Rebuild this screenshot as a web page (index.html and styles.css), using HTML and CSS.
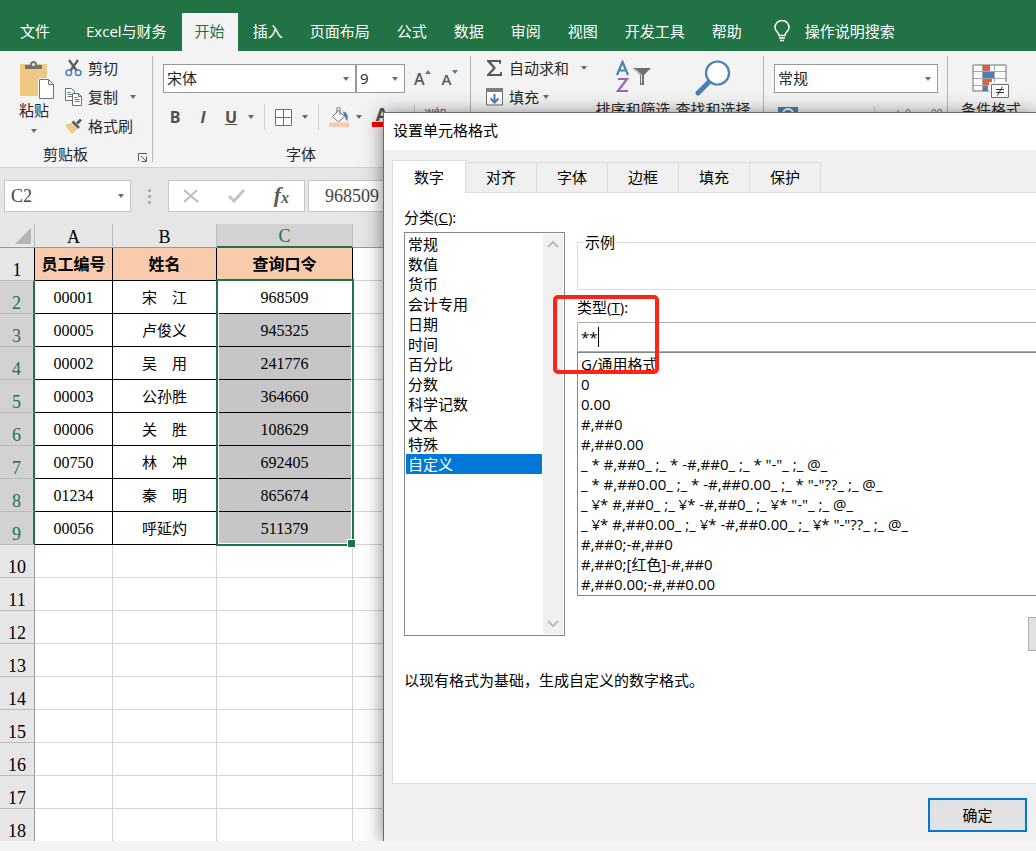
FILE: index.html
```html
<!DOCTYPE html>
<html lang="zh-CN">
<head>
    <meta charset="UTF-8">
    <meta name="viewport" content="width=device-width, initial-scale=1.0">
    <title>设置单元格格式</title>
    <link rel="stylesheet" href="styles.css">
</head>
<body>
    <div class="app">
        <header class="tab-bar">
            <button class="tab file-tab">文件</button>
            <button class="tab">Excel与财务</button>
            <button class="tab active">开始</button>
            <button class="tab">插入</button>
            <button class="tab">页面布局</button>
            <button class="tab">公式</button>
            <button class="tab">数据</button>
            <button class="tab">审阅</button>
            <button class="tab">视图</button>
            <button class="tab">开发工具</button>
            <button class="tab">帮助</button>
            <button class="tab search-tab">
                <svg width="18" height="22" viewBox="0 0 18 22" fill="none" stroke="#fff" stroke-width="1.5">
                    <path d="M6 15.500c0-3-4-4-4-8a7 7 0 0 1 14 0c0 4-4 5-4 8zM6 18h6M7 20.500h4"/>
                </svg>
                操作说明搜索
            </button>
        </header>

        <div class="ribbon">
            <section class="group clipboard">
                <div class="group-body">
                    <button class="big-button paste">
                        <svg width="36" height="40" viewBox="0 0 36 40">
                            <rect x="1" y="4" width="27" height="32" rx="1" fill="#efc981"/>
                            <path d="M6 9V5h5a3.500 4 0 0 1 7 0h5v4z" fill="#737373"/>
                            <circle cx="14.500" cy="4.500" r="1.500" fill="#f3f3f3"/>
                            <path d="M19 18h12l5 6v16h-17z" fill="#f3f3f3"/>
                            <path d="M20.500 19.500h9l5 5v14h-14z" fill="#fff" stroke="#737373"/>
                            <path d="M29.500 19.500v5h5" fill="none" stroke="#737373"/>
                        </svg>
                        <span>粘贴</span>
                        <i class="caret"></i>
                    </button>
                    <div class="stack">
                        <button class="row-button">
                            <svg width="17" height="18" viewBox="0 0 17 18" fill="none">
                                <path d="M4 1l7.500 10.500M13 1L5.500 11.500" stroke="#5f5f5f" stroke-width="2.400"/>
                                <circle cx="3.800" cy="13.800" r="2.800" stroke="#4a80b8" stroke-width="1.500"/>
                                <circle cx="13.200" cy="13.800" r="2.800" stroke="#4a80b8" stroke-width="1.500"/>
                            </svg>
                            剪切
                        </button>
                        <button class="row-button">
                            <svg width="17" height="18" viewBox="0 0 17 18" fill="#fff" stroke="#6f6f6f">
                                <path d="M.5.5h6l3 3v9h-9z"/>
                                <path d="M2.500 4.500h3M2.500 6.500h5M2.500 8.500h5" stroke="#4a80b8"/>
                                <path d="M7.500 5.500h6l3 3v9h-9z"/>
                                <path d="M13.500 5.500v3h3" fill="none"/>
                                <path d="M9.500 9.500h3M9.500 11.500h5M9.500 13.500h5" stroke="#4a80b8"/>
                            </svg>
                            复制
                            <i class="caret wide"></i>
                        </button>
                        <button class="row-button">
                            <svg width="17" height="18" viewBox="0 0 17 18">
                                <path d="M0 8l6-2 6 6-5 5z" fill="#efc981"/>
                                <path d="M6.500 5.500l2-2 6.500 6.500-2 2z" fill="#5f5f5f"/>
                                <path d="M11.500 5.500l3.500-3.500 1.500 1.500-3.500 3.500z" fill="#5f5f5f" stroke="#5f5f5f"/>
                            </svg>
                            格式刷
                        </button>
                    </div>
                </div>
                <div class="group-label">剪贴板</div>
                <button class="launcher" aria-label="剪贴板设置">
                    <svg width="10" height="9" viewBox="0 0 10 9" fill="none" stroke="#555"><path d="M.5 8V.5H9M3 3l5 5M8.500 3.500v5H3.500"/></svg>
                </button>
            </section>

            <section class="group font">
                <div class="font-row">
                    <div class="select font-name">
                        <select aria-label="字体"><option>宋体</option></select>
                    </div>
                    <div class="select font-size">
                        <select aria-label="字号"><option>9</option></select>
                    </div>
                    <button class="size-button" aria-label="增大字号">A<svg width="6" height="4" viewBox="0 0 6 4"><path d="M0 4l3-4 3 4z" fill="#4a80b8"/></svg></button>
                    <button class="size-button small" aria-label="减小字号">A<svg width="6" height="4" viewBox="0 0 6 4"><path d="M0 0h6L3 4z" fill="#4a80b8"/></svg></button>
                </div>
                <div class="font-row style-row">
                    <button class="letter"><b>B</b></button>
                    <button class="letter"><b><em>I</em></b></button>
                    <button class="letter underline"><b><u>U</u></b></button>
                    <i class="caret"></i>
                    <i class="divider"></i>
                    <button aria-label="边框">
                        <svg width="17" height="18" viewBox="0 0 17 18" fill="#fff" stroke="#6f6f6f"><path d="M.5 1.500h16v16H.5zM8.500 1.500v16M.5 9.500h16"/></svg>
                    </button>
                    <i class="caret"></i>
                    <i class="divider"></i>
                    <button class="fill-color" aria-label="填充颜色">
                        <svg width="20" height="20" viewBox="0 0 20 20">
                            <path d="M3.500 9.500l6-6 6 6-6 5.500z" fill="#fff" stroke="#6f6f6f"/>
                            <path d="M8 5V1.500a1.500 1.500 0 0 1 3 0V8" fill="none" stroke="#6f6f6f"/>
                            <path d="M14 4.500c4 .5 5.500 3.500 4.500 9.500-2-1-2-4-3.500-5.500z" fill="#4a80b8"/>
                            <rect y="15.500" width="20" height="4.500" fill="#f8cbad"/>
                        </svg>
                    </button>
                    <i class="caret"></i>
                    <button class="font-color" aria-label="字体颜色">A</button>
                    <i class="divider"></i>
                    <span class="pinyin">wén</span>
                </div>
                <div class="group-label">字体</div>
            </section>

            <section class="group editing">
                <div class="group-body">
                    <div class="stack">
                        <button class="row-button">
                            <svg width="17" height="18" viewBox="0 0 17 18"><path d="M1 1h14v4h-1.500L13 3H5l5 6-5.500 6H13.500l1-2H16v4H1v-1.500L7 9 1 2.500z" fill="#5a5a5a"/></svg>
                            自动求和
                            <i class="caret wide"></i>
                        </button>
                        <button class="row-button">
                            <svg width="17" height="18" viewBox="0 0 17 18">
                                <path d="M.5 1h16v16H.5z" fill="#fff" stroke="#6f6f6f"/>
                                <path d="M0 0h17v4H0z" fill="#808080"/>
                                <path d="M8.500 6v8M4.500 10.500l4 4 4-4" fill="none" stroke="#4a80b8" stroke-width="2"/>
                            </svg>
                            填充
                            <i class="caret near"></i>
                        </button>
                    </div>
                    <button class="big-button">
                        <svg width="36" height="38" viewBox="0 0 36 38" fill="none">
                            <path d="M2 15L7.500 2 13 15M4 10.500h7" stroke="#4a80b8" stroke-width="2.200"/>
                            <path d="M3 19h9L3 31h10" stroke="#9a66b5" stroke-width="2.200"/>
                            <path d="M18 8h18l-7 7v10h-4V15z" fill="#6f6f6f"/>
                            <path d="M20.500 9.500l6 5.500v8.500" stroke="#f3f3f3"/>
                        </svg>
                        <span>排序和筛选</span>
                    </button>
                    <button class="big-button">
                        <svg width="36" height="38" viewBox="0 0 36 38">
                            <path d="M3 33l11-11" stroke="#4a80b8" stroke-width="5" stroke-linecap="round"/>
                            <circle cx="22.500" cy="13" r="11.500" fill="#fff" stroke="#4a80b8" stroke-width="2.200"/>
                        </svg>
                        <span>查找和选择</span>
                    </button>
                </div>
            </section>

            <section class="group number">
                <div class="font-row">
                    <div class="select number-format">
                        <select aria-label="数字格式"><option>常规</option></select>
                    </div>
                </div>
                <div class="number-row">
                    <svg width="20" height="16" viewBox="0 0 20 16"><path d="M0 0h20v14H0z" fill="#4a80b8"/><circle cx="10" cy="7" r="5" fill="none" stroke="#fff" stroke-width="2"/></svg>
                    <span>%</span>
                    <span>,</span>
                    <i class="divider"></i>
                    <span class="decimals"><b>←</b>0</span>
                    <span class="decimals">00</span>
                </div>
            </section>

            <section class="group styles">
                <div class="group-body">
                    <button class="big-button">
                        <svg width="38" height="35" viewBox="0 0 38 35">
                            <path d="M1 1h33v26H1z" fill="#fff"/>
                            <path d="M11 1h7v6h-7zM11 15h9v6h-9z" fill="#dd6040"/>
                            <path d="M11 8h11v6H11zM11 22h5v5h-5z" fill="#4a80b8"/>
                            <path d="M1 7.500h33M1 14.500h33M1 21.500h33M10.500 1v26M22.500 1v26" fill="none" stroke="#a8a8a8"/>
                            <path d="M1 1h33v26H1z" fill="none" stroke="#6f6f6f"/>
                            <path d="M17 18h21v17H17z" fill="#f3f3f3"/>
                            <path d="M19.500 20.500h17v13h-17z" fill="#fff" stroke="#6f6f6f"/>
                            <path d="M24 25.500h8M24 28.500h8M30.500 22.500l-5 9" stroke="#333"/>
                        </svg>
                        <span>条件格式</span>
                    </button>
                </div>
            </section>
        </div>

        <div class="formula-bar">
            <div class="select name-box">
                <input type="text" value="C2" aria-label="名称框">
            </div>
            <div class="grip"><i></i><i></i><i></i></div>
            <div class="formula-buttons">
                <button aria-label="取消"><svg width="16" height="14" viewBox="0 0 16 14" fill="none" stroke="#bcbcbc" stroke-width="2"><path d="M1 1l14 12M14 1L1 13"/></svg></button>
                <button aria-label="输入"><svg width="17" height="14" viewBox="0 0 17 14" fill="none" stroke="#c4c4c4" stroke-width="3"><path d="M1 7l5 5L16 1"/></svg></button>
                <button class="fx"><b>f<sub>x</sub></b></button>
            </div>
            <input type="text" class="formula-input" value="968509" aria-label="编辑栏">
        </div>

        <table class="sheet">
            <colgroup>
                <col class="col-num"><col class="col-a"><col class="col-b"><col class="col-c"><col>
            </colgroup>
            <thead>
                <tr>
                    <th class="corner"><svg width="16" height="16" viewBox="0 0 16 16"><path d="M16 0v16H0z" fill="#b4b4b4"/></svg></th>
                    <th>A</th><th>B</th><th class="selected">C</th><th></th>
                </tr>
            </thead>
            <tbody>
                <tr class="data title"><th>1</th><td>员工编号</td><td>姓名</td><td>查询口令</td><td></td></tr>
                <tr class="data picked"><th>2</th><td>00001</td><td>宋　江</td><td class="current">968509<div class="selection"></div></td><td></td></tr>
                <tr class="data picked"><th>3</th><td>00005</td><td>卢俊义</td><td>945325</td><td></td></tr>
                <tr class="data picked"><th>4</th><td>00002</td><td>吴　用</td><td>241776</td><td></td></tr>
                <tr class="data picked"><th>5</th><td>00003</td><td>公孙胜</td><td>364660</td><td></td></tr>
                <tr class="data picked"><th>6</th><td>00006</td><td>关　胜</td><td>108629</td><td></td></tr>
                <tr class="data picked"><th>7</th><td>00750</td><td>林　冲</td><td>692405</td><td></td></tr>
                <tr class="data picked"><th>8</th><td>01234</td><td>秦　明</td><td>865674</td><td></td></tr>
                <tr class="data picked"><th>9</th><td>00056</td><td>呼延灼</td><td>511379</td><td></td></tr>
                <tr><th>10</th><td></td><td></td><td></td><td></td></tr>
                <tr><th>11</th><td></td><td></td><td></td><td></td></tr>
                <tr><th>12</th><td></td><td></td><td></td><td></td></tr>
                <tr><th>13</th><td></td><td></td><td></td><td></td></tr>
                <tr><th>14</th><td></td><td></td><td></td><td></td></tr>
                <tr><th>15</th><td></td><td></td><td></td><td></td></tr>
                <tr><th>16</th><td></td><td></td><td></td><td></td></tr>
                <tr><th>17</th><td></td><td></td><td></td><td></td></tr>
                <tr><th>18</th><td></td><td></td><td></td><td></td></tr>
            </tbody>
        </table>

        <div class="dialog" role="dialog" aria-labelledby="dialog-title">
            <div class="dialog-title" id="dialog-title">设置单元格格式</div>
            <div class="dialog-tabs">
                <button class="dialog-tab active">数字</button>
                <button class="dialog-tab">对齐</button>
                <button class="dialog-tab">字体</button>
                <button class="dialog-tab">边框</button>
                <button class="dialog-tab">填充</button>
                <button class="dialog-tab">保护</button>
            </div>
            <div class="panel">
                <div class="panel-columns">
                    <div class="category">
                        <div class="label" id="category-label">分类(<u>C</u>):</div>
                        <div class="listbox">
                            <ul role="listbox" aria-labelledby="category-label">
                                <li role="option">常规</li>
                                <li role="option">数值</li>
                                <li role="option">货币</li>
                                <li role="option">会计专用</li>
                                <li role="option">日期</li>
                                <li role="option">时间</li>
                                <li role="option">百分比</li>
                                <li role="option">分数</li>
                                <li role="option">科学记数</li>
                                <li role="option">文本</li>
                                <li role="option">特殊</li>
                                <li role="option" class="chosen" aria-selected="true">自定义</li>
                            </ul>
                            <div class="scrollbar">
                                <svg width="12" height="8" viewBox="0 0 12 8" fill="none" stroke="#bcbcbc" stroke-width="2"><path d="M1 7l5-5 5 5"/></svg>
                                <svg width="12" height="8" viewBox="0 0 12 8" fill="none" stroke="#bcbcbc" stroke-width="2"><path d="M1 1l5 5 5-5"/></svg>
                            </div>
                        </div>
                    </div>
                    <div class="custom">
                        <fieldset class="sample"><legend>示例</legend></fieldset>
                        <div class="type">
                            <label class="label" for="type-input">类型(<u>T</u>):</label>
                            <div class="type-field">
                                <input type="text" id="type-input" value="**">
                                <i class="text-cursor"></i>
                            </div>
                            <ul class="formats" role="listbox" aria-label="类型">
                                <li role="option">G/通用格式</li>
                                <li role="option">0</li>
                                <li role="option">0.00</li>
                                <li role="option">#,##0</li>
                                <li role="option">#,##0.00</li>
                                <li role="option">_ * #,##0_ ;_ * -#,##0_ ;_ * "-"_ ;_ @_</li>
                                <li role="option">_ * #,##0.00_ ;_ * -#,##0.00_ ;_ * "-"??_ ;_ @_</li>
                                <li role="option">_ ¥* #,##0_ ;_ ¥* -#,##0_ ;_ ¥* "-"_ ;_ @_</li>
                                <li role="option">_ ¥* #,##0.00_ ;_ ¥* -#,##0.00_ ;_ ¥* "-"??_ ;_ @_</li>
                                <li role="option">#,##0;-#,##0</li>
                                <li role="option">#,##0;[红色]-#,##0</li>
                                <li role="option">#,##0.00;-#,##0.00</li>
                            </ul>
                            <div class="highlight"></div>
                        </div>
                        <button class="delete-button" aria-label="删除"></button>
                    </div>
                </div>
                <p class="hint">以现有格式为基础，生成自定义的数字格式。</p>
            </div>
            <div class="dialog-footer">
                <button class="ok-button">确定</button>
            </div>
        </div>
    </div>
</body>
</html>
```
FILE: styles.css
```css
* {
    box-sizing: border-box;
}

body {
    margin: 0;
    background-color: #f4f4f4;
    color: #262626;
    font: 15px/20px "Open Sans", "Noto Sans CJK SC", sans-serif;
}

button {
    margin: 0;
    padding: 0;
    border: none;
    background: none;
    color: inherit;
    font: inherit;
    white-space: nowrap;
}

input, select {
    font: inherit;
    color: inherit;
    border-radius: 0;
    outline: none;
}

ul {
    margin: 0;
    padding: 0;
    list-style: none;
}

svg {
    flex: none;
    display: block;
}

.app {
    position: relative;
    height: calc(100vh - 10px);
    overflow: hidden;
    background-color: white;
}

/* ribbon tabs */
.tab-bar {
    display: flex;
    gap: 3px;
    height: 51px;
    padding: 13px 0 0 8px;
    background-color: #217346;
    color: white;
}

.tab {
    height: 38px;
    padding: 0 12px 3px;
}

.file-tab {
    margin-right: 9px;
}

.tab.active {
    padding: 0 13px 3px;
    background-color: #f3f3f3;
    color: #217346;
}

.search-tab {
    display: flex;
    align-items: center;
    gap: 14px;
    margin-left: 4px;
}

/* ribbon */
.ribbon {
    display: flex;
    height: 117px;
    background-color: #f3f3f3;
    border-bottom: 1px solid #d2d2d2;
    overflow: hidden;
}

.group {
    position: relative;
    flex: none;
    display: flex;
    flex-direction: column;
    padding-top: 2px;
}

.group::after {
    content: "";
    position: absolute;
    top: 5px;
    bottom: 5px;
    right: 0;
    width: 1px;
    background-color: #b4b4b4;
}

.group-body {
    display: flex;
}

.group-label {
    margin-top: auto;
    padding-right: 22px;
    line-height: 26px;
    text-align: center;
}

.clipboard {
    width: 153px;
}

.font {
    width: 318px;
}

.editing {
    width: 293px;
}

.number {
    width: 184px;
}

.styles {
    flex: 1;
}

.styles::after {
    display: none;
}

.big-button {
    display: flex;
    flex-direction: column;
    align-items: center;
    height: 87px;
    padding-top: 7px;
}

.big-button span {
    margin-top: auto;
    margin-bottom: 21px;
}

.paste {
    width: 36px;
    margin: 0 13px 0 16px;
}

.paste svg {
    margin-left: 6px;
}

.paste span {
    margin: 0;
}

.paste .caret {
    margin-top: 9px;
}

.caret {
    flex: none;
    width: 0;
    border: 3px solid transparent;
    border-top: 4px solid #6a6a6a;
    border-bottom: none;
}

.caret.wide {
    margin-left: 6px;
}

.caret.near {
    margin-left: -2px;
}

.row-button {
    display: flex;
    align-items: center;
    gap: 6px;
    height: 29px;
}

.launcher {
    position: absolute;
    right: 5px;
    bottom: 5px;
}

.select {
    position: relative;
    height: 29px;
    border: 1px solid #999;
    background-color: white;
}

.select select, .select input {
    display: block;
    width: 100%;
    height: 100%;
    padding: 0 3px 2px;
    border: none;
    background: none;
    appearance: none;
}

.select::after {
    content: "";
    position: absolute;
    top: 12px;
    right: 6px;
    border: 3px solid transparent;
    border-top: 4px solid #6a6a6a;
    border-bottom: none;
}

.font-row {
    display: flex;
    align-items: center;
    padding: 11px 0 0 10px;
}

.font-name {
    width: 193px;
}

.font-size {
    width: 49px;
}

.number-format {
    width: 164px;
}

.size-button {
    display: flex;
    align-items: center;
    margin-left: 9px;
    color: #5a5a5a;
    font-size: 16px;
    font-weight: 600;
}

.size-button svg {
    margin-bottom: 14px;
}

.size-button.small {
    margin-left: 11px;
    font-size: 15px;
}

.style-row {
    gap: 10px;
    padding: 11px 0 0 15px;
    color: #505050;
}

.letter {
    width: 14px;
    height: 26px;
    margin-right: 4px;
    font-size: 16px;
}

.letter.underline {
    margin-right: 0;
}

.divider {
    flex: none;
    width: 1px;
    height: 26px;
    background-color: #d0d0d0;
}

.fill-color {
    margin-right: -3px;
}

.font-color {
    flex: none;
    width: 20px;
    height: 20px;
    margin-right: 12px;
    border-bottom: 5px solid red;
    font-size: 18px;
    font-weight: 700;
    line-height: 15px;
}

.pinyin {
    align-self: flex-start;
    font-size: 11px;
    line-height: 14px;
}

.editing .stack {
    width: 122px;
    padding-left: 15px;
}

.editing .big-button {
    width: 80px;
}

.number-row {
    display: flex;
    align-items: flex-start;
    gap: 20px;
    padding: 14px 0 0 14px;
    color: #6a6a6a;
}

.decimals {
    font-size: 10px;
    line-height: 12px;
}

.decimals b {
    color: #4a80b8;
}

.styles .big-button {
    width: 86px;
    padding-top: 11px;
}

/* formula bar */
.formula-bar {
    display: flex;
    align-items: center;
    height: 56px;
    padding: 0 0 0 4px;
    background-color: #e6e6e6;
    color: #444;
    font: 18px/20px "Liberation Serif", serif;
}

.name-box {
    width: 127px;
    height: 32px;
    border-color: #c6c6c6;
}

.name-box input {
    padding: 0 6px;
}

.name-box::after {
    top: 13px;
}

.grip {
    display: flex;
    flex-direction: column;
    gap: 3px;
    width: 37px;
    padding-left: 17px;
}

.grip i {
    width: 3px;
    height: 3px;
    background-color: #b0b0b0;
}

.formula-buttons {
    display: flex;
    align-items: center;
    justify-content: space-between;
    width: 137px;
    height: 32px;
    padding: 0 15px 0 14px;
    border: 1px solid #c6c6c6;
    background-color: white;
}

.fx {
    color: #5a5a5a;
    font-size: 22px;
    font-style: italic;
}

.fx sub {
    font-size: 16px;
    vertical-align: -1px;
}

.formula-input {
    flex: 1;
    height: 32px;
    margin-left: 3px;
    padding: 0 16px;
    border: 1px solid #c6c6c6;
}

/* sheet */
.sheet {
    width: 100%;
    table-layout: fixed;
    border-spacing: 0;
    color: black;
    font: 16px/20px "Liberation Serif", "Noto Sans CJK SC", serif;
}

.col-num {
    width: 35px;
}

.col-a {
    width: 78px;
}

.col-b {
    width: 104px;
}

.col-c {
    width: 136px;
}

.sheet th {
    height: 33px;
    padding: 0;
    background-color: #e6e6e6;
    border-right: 1px solid #999;
    border-bottom: 1px solid #bbb;
    font-size: 18px;
    font-weight: 400;
    vertical-align: bottom;
}

.sheet thead th {
    height: 24px;
    border-right-color: #bbb;
    border-bottom-color: #999;
}

.sheet thead .selected {
    background-color: #d2d2d2;
    border-bottom: 2px solid #217346;
    color: #217346;
}

.corner svg {
    margin: 0 0 3px 15px;
}

.sheet td {
    height: 33px;
    padding: 2px 0 0;
    border-right: 1px solid #d4d4d4;
    border-bottom: 1px solid #d4d4d4;
    text-align: center;
}

.data td:not(:last-child) {
    border-color: black;
}

.title th {
    border-right-color: black;
}

.title td:not(:last-child) {
    background-color: #f8cbad;
    font-weight: 700;
}

.picked th {
    background-color: #d2d2d2;
    border-right: 2px solid #217346;
    color: #217346;
}

.picked td:nth-child(3) {
    font-size: 15px;
}

.picked td:nth-child(4) {
    background-color: #c6c6c6;
}

.picked td.current {
    position: relative;
    background-color: white;
}

.selection {
    position: absolute;
    top: -2px;
    left: -1px;
    width: 138px;
    height: 267px;
    border: 2px solid #217346;
    box-shadow: inset 0 0 0 1px white;
}

.selection::after {
    content: "";
    position: absolute;
    right: -4px;
    bottom: -4px;
    width: 7px;
    height: 7px;
    border: 1px solid white;
    background-color: #217346;
}

/* dialog */
.dialog {
    position: absolute;
    top: 112px;
    left: 383px;
    right: 0;
    bottom: 0;
    display: flex;
    flex-direction: column;
    border: solid #6a6a6a;
    border-width: 1px 0 0 1px;
    background-color: #f0f0f0;
    box-shadow: 0 2px 18px rgba(0, 0, 0, 0.5);
    color: black;
}

.dialog-title {
    height: 37px;
    padding: 0 9px;
    background-color: white;
    line-height: 35px;
}

.dialog-tabs {
    position: relative;
    display: flex;
    align-items: flex-end;
    height: 43px;
    padding-left: 8px;
}

.dialog-tab {
    width: 71px;
    height: 31px;
    padding-bottom: 1px;
    border: 1px solid #dcdcdc;
    border-left: none;
}

.dialog-tab.active {
    width: 74px;
    height: 33px;
    border: 1px solid #dcdcdc;
    border-bottom: none;
    background-color: white;
}

.panel {
    flex: 1;
    margin: -1px 0 0 8px;
    padding: 14px 0 0 11px;
    border: 1px solid #dcdcdc;
    border-right: none;
    background-color: white;
}

.panel-columns {
    display: flex;
    gap: 12px;
}

.category {
    flex: none;
    width: 161px;
}

.label {
    display: block;
    height: 25px;
}

.listbox {
    display: flex;
    height: 404px;
    padding: 1px;
    border: 1px solid #828790;
}

.listbox ul {
    flex: 1;
}

.listbox li {
    padding-left: 2px;
}

.listbox .chosen {
    background-color: #0078d7;
    color: white;
}

.scrollbar {
    display: flex;
    flex-direction: column;
    justify-content: space-between;
    align-items: center;
    width: 20px;
    margin-left: 1px;
    padding: 6px 0;
    background-color: #f0f0f0;
}

.custom {
    flex: 1;
    min-width: 0;
    padding-top: 25px;
}

.sample {
    height: 58px;
    margin: 0;
    padding: 0;
    border: 1px solid #dcdcdc;
    border-right: none;
}

.sample legend {
    margin-left: 6px;
    padding: 0 1px;
}

.type {
    position: relative;
    margin-top: 7px;
}

.type-field {
    display: flex;
    align-items: center;
    height: 30px;
    border: 1px solid #adadad;
    border-right: none;
}

.type-field input {
    width: 20px;
    padding: 0 0 0 3px;
    border: none;
    background: none;
}

.text-cursor {
    width: 1px;
    height: 20px;
    background-color: black;
}

.formats {
    height: 244px;
    padding: 1px 0 0 3px;
    border: 1px solid #828790;
    border-right: none;
    overflow: hidden;
    white-space: nowrap;
}

.highlight {
    position: absolute;
    top: -2px;
    left: -24px;
    width: 106px;
    height: 79px;
    border: 4px solid #ff2314;
    border-radius: 5px;
}

.delete-button {
    display: block;
    width: 8px;
    height: 34px;
    margin: 21px 0 0 auto;
    border: 1px solid #adadad;
    border-right: none;
    background-color: #e1e1e1;
}

.hint {
    margin: 19px 0 0;
}

.dialog-footer {
    display: flex;
    justify-content: flex-end;
    height: 57px;
    padding: 14px 9px 0 0;
}

.ok-button {
    width: 99px;
    height: 34px;
    border: 2px solid #0078d7;
    background-color: #e1e1e1;
}
```
